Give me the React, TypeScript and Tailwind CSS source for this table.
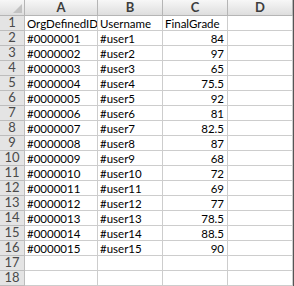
import React from 'react';

type Row = { id: string; user: string; grade: string };

const rows: Row[] = [
  { id: 'OrgDefinedID', user: 'Username', grade: 'FinalGrade' },
  { id: '#0000001', user: '#user1', grade: '84' },
  { id: '#0000002', user: '#user2', grade: '97' },
  { id: '#0000003', user: '#user3', grade: '65' },
  { id: '#0000004', user: '#user4', grade: '75.5' },
  { id: '#0000005', user: '#user5', grade: '92' },
  { id: '#0000006', user: '#user6', grade: '81' },
  { id: '#0000007', user: '#user7', grade: '82.5' },
  { id: '#0000008', user: '#user8', grade: '87' },
  { id: '#0000009', user: '#user9', grade: '68' },
  { id: '#0000010', user: '#user10', grade: '72' },
  { id: '#0000011', user: '#user11', grade: '69' },
  { id: '#0000012', user: '#user12', grade: '77' },
  { id: '#0000013', user: '#user13', grade: '78.5' },
  { id: '#0000014', user: '#user14', grade: '88.5' },
  { id: '#0000015', user: '#user15', grade: '90' },
  { id: '', user: '', grade: '' },
  { id: '', user: '', grade: '' },
];

const cols = 'grid grid-cols-[25px_73px_65px_65px_65px_1px]';
const cell = 'flex items-end whitespace-nowrap overflow-hidden border-r border-b border-[#cdcdcd] pb-[1px] text-[11.5px] leading-none text-black';

export default function App() {
  return (
    <div className="w-[294px] h-[286px] overflow-hidden bg-white font-['Lato','Liberation_Sans',sans-serif]">
      {/* column headers */}
      <div className={`${cols} h-[16px]`}>
        <div className="relative border-r border-b border-[#b5b5b5] bg-gradient-to-b from-[#f7f7f7] to-[#dedede]">
          <svg className="absolute right-[2px] bottom-[2px]" width="9" height="9" viewBox="0 0 9 9">
            <path d="M9 0V9H0Z" fill="#c2c2c2" />
          </svg>
        </div>
        {['A', 'B', 'C', 'D'].map((c) => (
          <div
            key={c}
            className="flex items-center justify-center border-r border-b border-[#b5b5b5] bg-gradient-to-b from-[#f7f7f7] to-[#dedede] text-[13px] font-bold leading-none text-[#3d3d3d]"
          >
            {c}
          </div>
        ))}
        <div className="bg-[#555]" />
      </div>

      {rows.map((r, i) => (
        <div key={i} className={`${cols} h-[15px]`}>
          <div className="flex items-end justify-center border-r border-b border-[#bdbdbd] bg-[#e4e4e4] pb-[1px] text-[13px] leading-none text-[#4a4a4a]">
            {i + 1}
          </div>
          <div className={`${cell} pl-[2px]`}>{r.id}</div>
          <div className={`${cell} pl-[2px]`}>{r.user}</div>
          <div className={`${cell} ${i === 0 ? 'pl-[2px]' : 'justify-end pr-[3px]'}`}>{r.grade}</div>
          <div className="border-r border-b border-[#cdcdcd]" />
          <div className="bg-[#555]" />
        </div>
      ))}
    </div>
  );
}
